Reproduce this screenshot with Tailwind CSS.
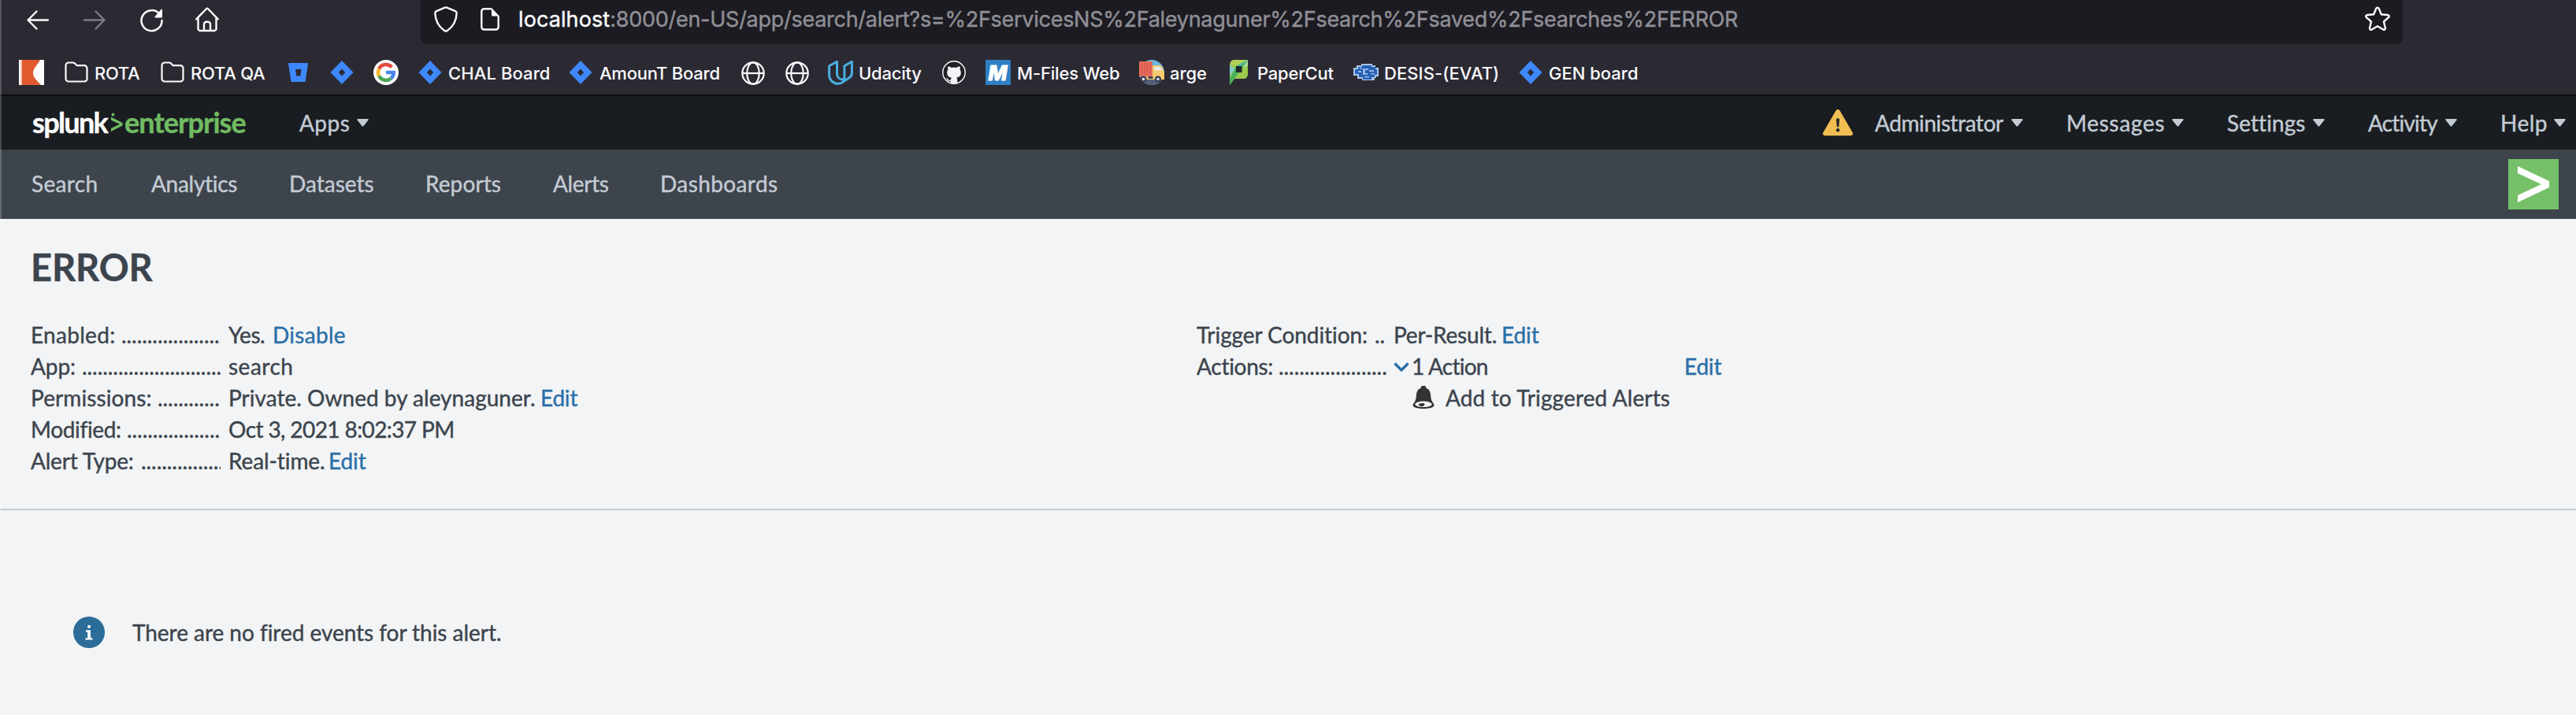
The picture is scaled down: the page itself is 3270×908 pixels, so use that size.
<!DOCTYPE html>
<html lang="en">
<head>
<meta charset="utf-8">
<title>ERROR | Splunk</title>
<script src="https://cdn.jsdelivr.net/npm/@tailwindcss/browser@4"></script>
</head>
<body class="w-[3270px] h-[908px] overflow-hidden bg-[#f2f4f5] text-[#3c444d] font-['Lato',sans-serif] text-[28px] leading-[40px] whitespace-nowrap">

<svg class="hidden">
  <defs>
    <linearGradient id="jg1" x1="1" y1="0" x2="0.4" y2="0.7"><stop offset="0.1" stop-color="#1f5fd0"/><stop offset="1" stop-color="#3f88fb"/></linearGradient>
    <linearGradient id="jg2" x1="0" y1="1" x2="0.6" y2="0.3"><stop offset="0.1" stop-color="#1f5fd0"/><stop offset="1" stop-color="#3f88fb"/></linearGradient>
    <linearGradient id="bb" x1="1" y1="0.3" x2="0.4" y2="0.9"><stop offset="0.1" stop-color="#1f5fd0"/><stop offset="1" stop-color="#3f88fb"/></linearGradient>
    <symbol id="jira" viewBox="0 0 30 32">
      <path d="M15 1 29.500 16 15 31 .5 16zM15 11.500 10.800 16l4.200 4.500L19.200 16z" fill="#3f88fb" fill-rule="evenodd"/>
      <path d="M15 1v10.500L10.800 16 8.500 18 6 10.300z" fill="url(#jg1)"/>
      <path d="M15 31V20.500L19.200 16 21.500 14 24 21.700z" fill="url(#jg2)"/>
    </symbol>
    <symbol id="folder" viewBox="0 0 30 28">
      <path d="M1.500 5a3.500 3.500 0 0 1 3.500-3.500h5.500c1 0 1.800.3 2.500 1l2.700 2.700h9.300a3.500 3.500 0 0 1 3.500 3.500V22a3.500 3.500 0 0 1-3.500 3.500H5A3.500 3.500 0 0 1 1.500 22z" fill="none" stroke="#fbfbfe" stroke-width="2.200"/>
    </symbol>
    <symbol id="globe" viewBox="0 0 30 30">
      <g fill="none" stroke="#fbfbfe" stroke-width="2.200"><circle cx="15" cy="15" r="13.700"/><ellipse cx="15" cy="15" rx="7.800" ry="13.700"/><path d="M1.500 15h27"/></g>
    </symbol>
    <symbol id="caret" viewBox="0 0 15 10"><path d="M1.200 0h12.600c.9 0 1.300.9.700 1.600L8.500 9c-.6.700-1.400.7-2 0L.5 1.600C-.1.900.3 0 1.200 0z" fill="currentColor"/></symbol>
  </defs>
</svg>

<!-- browser toolbar -->
<header class="h-[122px] bg-[#2b2a33] border-b-2 border-[#0c0c0d] text-[#fbfbfe] font-['Inter',sans-serif]">
  <div class="h-[56px] flex">
    <div class="w-[534px] flex items-start pl-[34px] pt-2">
      <svg class="w-[28px] h-[34px] mr-[44px]" viewBox="0 0 28 34" fill="none" stroke="#fbfbfe" stroke-width="2.400" stroke-linecap="round" stroke-linejoin="round"><path d="M27 17.500H2M12.500 6.500 1.500 17.500l11 11"/></svg>
      <svg class="w-[28px] h-[34px] mr-[44px]" viewBox="0 0 28 34" fill="none" stroke="#7d7c84" stroke-width="2.400" stroke-linecap="round" stroke-linejoin="round"><path d="M1 17.500h25M15.500 6.500l11 11-11 11"/></svg>
      <svg class="w-[29px] h-[34px] mr-[41px]" viewBox="0 0 29 34"><path d="M24.500 9.800A13 13 0 1 0 27.500 18" fill="none" stroke="#fbfbfe" stroke-width="2.500" stroke-linecap="round"/><path d="M28 4.500v9a1 1 0 0 1-1 1h-7.600c-.9 0-1.300-1-.7-1.600l7.700-9c.6-.6 1.600-.3 1.600.6z" fill="#fbfbfe"/></svg>
      <svg class="w-[30px] h-[34px]" viewBox="0 0 30 34" fill="none" stroke="#fbfbfe" stroke-width="2.400" stroke-linecap="round" stroke-linejoin="round"><path d="M1.300 16.300 13.600 3.500a2 2 0 0 1 2.800 0l12.300 12.800M3.500 14.500v14a2.500 2.500 0 0 0 2.500 2.500h18a2.500 2.500 0 0 0 2.500-2.500v-14M11 30.500v-7.800a3 3 0 0 1 3-3h2a3 3 0 0 1 3 3v7.800"/></svg>
    </div>
    <div class="w-[2516px] h-[56px] rounded-b-lg bg-[#1c1b22] flex items-start pl-[17px]">
      <svg class="w-[30px] h-[34px] mt-[7px] mr-[29px]" viewBox="0 0 30 34" fill="none" stroke="#fbfbfe" stroke-width="2.400" stroke-linejoin="round"><path d="M13.800 2.600a3 3 0 0 1 2.400 0L27 7.200c1.100.5 1.800 1.400 1.700 2.600-.5 10.200-4.600 17.200-11.700 22a3.300 3.300 0 0 1-4 0C5.900 27 1.800 20 1.300 9.800c0-1.200.6-2.100 1.700-2.600z"/></svg>
      <svg class="w-[24px] h-[34px] mt-[7px] mr-[24px]" viewBox="0 0 24 34"><path d="M14 4.200H4.500A3.200 3.200 0 0 0 1.300 7.400v19.900a3.200 3.200 0 0 0 3.200 3.200h15a3.200 3.200 0 0 0 3.200-3.200V13" fill="none" stroke="#fbfbfe" stroke-width="2.400"/><path d="M14 3l10 10.500h-8.500a1.500 1.500 0 0 1-1.500-1.500z" fill="#fbfbfe"/></svg>
      <div class="w-[2344px] mt-[5px] flex text-[27px] leading-[40px] [-webkit-text-stroke:0.4px]"><span class="tracking-[0.1px]">localhost</span><span class="text-[#8f8f96] tracking-[-0.27px]">:8000/en-US/app/search/alert?s=%2FservicesNS%2Faleynaguner%2Fsearch%2Fsaved%2Fsearches%2FERROR</span></div>
      <svg class="w-[32px] h-[32px] mt-[8px]" viewBox="0 0 32 32" fill="none" stroke="#fbfbfe" stroke-width="2.400" stroke-linejoin="round"><path d="M14.300 2.700c.7-1.500 2.700-1.500 3.400 0l3.100 7.600 8.200.7c1.700.2 2.300 2 1 3.200l-6 5.300 1.900 8.100c.3 1.700-1.300 2.800-2.700 1.900L16 25.300l-7.200 4.200c-1.400.9-3-.2-2.700-1.900L8 19.500l-6-5.300c-1.300-1.200-.7-3 1-3.200l8.200-.7z"/></svg>
    </div>
  </div>

  <nav class="h-[64px] mt-[1px] pl-6 flex text-[22px] leading-[40px] font-medium pt-4">
    <div class="w-[58px]"><svg class="w-8 h-8 mt-[3px]" viewBox="0 0 32 32"><path d="M0 0h32v32H0z" fill="#fff"/><path d="M2 0h2v32H2z" fill="#f4c4b2"/><path d="M4 0h23c-3 6-9 10-9 17 0 6 6 10 10 15H4z" fill="#e0592f"/></svg></div>
    <div class="w-[122px] flex"><svg class="w-[30px] h-[28px] mt-[5px] mr-[8px]"><use href="#folder"/></svg><span class="tracking-[-0.31px]">ROTA</span></div>
    <div class="w-[162px] flex"><svg class="w-[30px] h-[28px] mt-[5px] mr-[8px]"><use href="#folder"/></svg><span class="tracking-[-0.25px]">ROTA QA</span></div>
    <div class="w-[53px]"><svg class="w-[25px] h-[24px] mt-[7px]" viewBox="0 0 25 24"><path d="M.8 0h23.400c.5 0 .9.5.8 1l-3.300 22c-.1.600-.5 1-1.100 1H4.600c-.6 0-1.100-.4-1.200-1L0 1C-.1.500.3 0 .8 0zM9 8l1.300 8.500h5L16.500 8z" fill="#3f88fb" fill-rule="evenodd"/><path d="M23.800 8h-7.300l-1.200 8.500h-5L4 23.700c.2.200.4.300.6.300h16c.6 0 1-.4 1.100-1z" fill="url(#bb)"/></svg></div>
    <div class="w-[55px]"><svg class="w-[30px] h-8 mt-[3px]"><use href="#jira"/></svg></div>
    <div class="w-[57px]"><svg class="w-8 h-8 mt-[3px]" viewBox="0 0 32 32"><circle cx="16" cy="16" r="16" fill="#fff"/><g fill="none" stroke-width="4.600"><path d="M23.400 9.200A10 10 0 0 0 7.100 11.500" stroke="#e04a3c"/><path d="M7.100 11.500a10 10 0 0 0 0 9" stroke="#f5bb2e"/><path d="M7.100 20.500a10 10 0 0 0 15.400 3" stroke="#4aa556"/><path d="M22.500 23.500A9.500 9.500 0 0 0 25.700 16H16" stroke="#4a86ee"/></g></svg></div>
    <div class="w-[191px] flex"><svg class="w-[30px] h-8 mt-[3px] mr-[8px]"><use href="#jira"/></svg><span class="tracking-[0.1px]">CHAL Board</span></div>
    <div class="w-[219px] flex"><svg class="w-[30px] h-8 mt-[3px] mr-[9px]"><use href="#jira"/></svg><span class="tracking-[-0.25px]">AmounT Board</span></div>
    <div class="w-[56px]"><svg class="w-[30px] h-[30px] mt-[5px]"><use href="#globe"/></svg></div>
    <div class="w-[54px]"><svg class="w-[30px] h-[30px] mt-[5px]"><use href="#globe"/></svg></div>
    <div class="w-[145px] flex"><svg class="w-8 h-8 mt-[3px] mr-[7px]" viewBox="0 0 32 32" fill="none" stroke="#4aaee0" stroke-width="3" stroke-linejoin="round" stroke-linecap="round"><path d="M11.500 2.200 1.600 7.800v11.500a11 11 0 0 0 18.400 8l7-4.600a7 7 0 0 0 3.400-6V2.200l-9.500 5.600v15.500a1.800 1.800 0 0 1-1.800 1.800c-4.500 0-7.600-3-7.600-7.500z"/></svg><span class="tracking-[-0.2px]">Udacity</span></div>
    <div class="w-[55px]"><svg class="w-[30px] h-[30px] mt-[4px]" viewBox="0 0 30 30"><circle cx="15" cy="15" r="14.200" fill="#202127" stroke="#fff" stroke-width="1.400"/><path d="M7.500 7.300c1.800 0 3.200.9 4.200 1.700a14 14 0 0 1 6.600 0c1-.8 2.400-1.700 4.200-1.700.5 1.400.4 2.800 0 3.900 1 1.200 1.300 2.600 1.300 4.200 0 4-2.400 5.500-5.600 6 .8 1 1 2 1 3.200V29.500h-8.400v-3.300c-3.300.7-4-1.700-5-2.900-.5-.6-1.300-.9-1-1.200 1.800-.5 2.700 1.500 3.700 2.300.8.600 1.700.5 2.400.2 0-1.200.4-2.100 1-2.800-3.300-.5-5.700-2.200-5.700-6.200 0-1.700.4-3.200 1.300-4.400-.4-1.100-.5-2.500 0-3.900z" fill="#f4f4f6"/></svg></div>
    <div class="w-[195px] flex"><svg class="w-8 h-8 mt-[3px] mr-[8px]" viewBox="0 0 32 32"><path d="M0 0h32v32H0z" fill="#2f7fc4"/><text x="15.500" y="25.500" text-anchor="middle" textLength="24" lengthAdjust="spacingAndGlyphs" fill="#fff" stroke="#fff" stroke-width="1" font-family="Inter" font-size="26" font-weight="800" font-style="italic">M</text></svg><span class="tracking-[-0.18px]">M-Files Web</span></div>
    <div class="w-[115px] flex"><svg class="w-8 h-8 mt-[3px] mr-[7px]" viewBox="0 0 32 32"><circle cx="16" cy="16" r="16" fill="#6cb8de"/><path d="M1 22h30a16 16 0 0 1-30 0z" fill="#56627c"/><path d="M0 2h17v19H0z" fill="#ea6b5c"/><path d="M3.500 4v15M7 4v15M10.500 4v15M14 4v15" stroke="#c9554a" stroke-width="1"/><path d="M17 7h9c2 0 3.500 2 4.500 5l1.500 4v9H2v-4h15z" fill="#f8cb6c"/><path d="M19 9h7c1.500 0 2.500 2 3 4.500H19z" fill="#e8eaf0"/><path d="M11.500 21h6v3h-6z" fill="#3e4860"/><circle cx="5.500" cy="24.500" r="4" fill="#343e56"/><circle cx="5.500" cy="24.500" r="1.700" fill="#e8eaf0"/><circle cx="24" cy="24.500" r="4" fill="#343e56"/><circle cx="24" cy="24.500" r="1.700" fill="#e8eaf0"/></svg><span class="tracking-[-0.07px]">arge</span></div>
    <div class="w-[157px] flex"><svg class="w-[23px] h-8 mt-[3px] mr-[12px]" viewBox="0 0 23 32"><path d="M6 0h17v18.500A5.500 5.500 0 0 1 17.500 24H6L0 32V6a6 6 0 0 1 6-6z" fill="#9ccb50"/><path d="M6 0h17L7 8 1 3.500A6 6 0 0 1 6 0z" fill="#b3cf55"/><path d="M23 0v7l-5 3-6-4z" fill="#b5dba4"/><path d="M0 6.500 7.500 12 0 20z" fill="#86cbc8"/><path d="M23 0 8 8 0 24v8l9-12 6-8z" fill="#4bb25c"/><path d="M23 0 8 8l4 2z" fill="#4db5a5"/><path d="M8 8h7.500v8H8z" fill="#202a2c"/></svg><span class="tracking-[-0.2px]">PaperCut</span></div>
    <div class="w-[210px] flex"><svg class="w-8 h-[22px] mt-[8px] mr-[7px]" viewBox="0 0 32 22"><path d="M0 5h4V2h6V0h14v2h4v3h4v11h-3v2h-2v3H11v-2H5v-4H0z" fill="#a9c8ea"/><path d="M2 7h4V4h5V2h12v2h5v3h2v7h-3v3h-4v3H12v-3H7v-4H2z" fill="#2760b4"/><path d="M6 9h4v2H6zM12 6h7v2h-4v4h3v2h-6zM20 8h6v2h-6zM22 12h5v1.500h-5zM14 16h6v1.500h-6zM8 5h3v1.500H8z" fill="#8db8e6"/></svg><span class="tracking-[0.07px]">DESIS-(EVAT)</span></div>
    <div class="flex"><svg class="w-[30px] h-8 mt-[3px] mr-[8px]"><use href="#jira"/></svg><span>GEN board</span></div>
  </nav>
</header>

<!-- Splunk bar -->
<div class="h-[68px] bg-[#191d21] text-[#c3cbd4] flex items-center pl-[41px] pb-[1px] [-webkit-text-stroke:0.4px]">
  <div class="w-[339px] flex items-center pb-[2px]">
    <span class="w-[99px] text-[36px] font-bold text-white tracking-[-1.65px]">splunk</span>
    <svg class="w-[17px] h-[28px] mt-[3px]" viewBox="0 0 17 28"><path d="M1 6.500 15.500 14v3.500L1 25v-4l11-5.200L1 10.500z" fill="#71bb62"/><circle cx="3.500" cy="3.500" r="1.900" fill="#71bb62"/></svg>
    <span class="text-[36px] font-bold text-[#71bb62] tracking-[-0.95px] ml-[1px]">enterprise</span>
  </div>
  <div class="w-[1934px] flex items-center"><span class="w-[73px] tracking-[0.45px]">Apps</span><svg class="w-[15px] h-[10px]"><use href="#caret"/></svg></div>
  <svg class="w-[38px] h-[34px] mr-[28px]" viewBox="0 0 38 34"><path d="M16.300 1.700c1.200-2.200 4.200-2.200 5.400 0L37.500 29c1.200 2.200.3 4.200-2 4.200h-33c-2.300 0-3.200-2-2-4.200z" fill="#f0be52"/><path d="M17 13c0-2.400 4-2.400 4 0l-.7 8.500c-.2 1.200-2.400 1.200-2.600 0z" fill="#20252a"/><circle cx="19" cy="26.300" r="2.200" fill="#20252a"/></svg>
  <div class="w-[243px] flex items-center"><span class="w-[173px] tracking-[-0.42px]">Administrator</span><svg class="w-[15px] h-[10px]"><use href="#caret"/></svg></div>
  <div class="w-[204px] flex items-center"><span class="w-[134px] tracking-[0.7px]">Messages</span><svg class="w-[15px] h-[10px]"><use href="#caret"/></svg></div>
  <div class="w-[179px] flex items-center"><span class="w-[109px] tracking-[0.08px]">Settings</span><svg class="w-[15px] h-[10px]"><use href="#caret"/></svg></div>
  <div class="w-[168px] flex items-center"><span class="w-[98px] tracking-[-0.82px]">Activity</span><svg class="w-[15px] h-[10px]"><use href="#caret"/></svg></div>
  <div class="flex items-center"><span class="w-[68px] tracking-[0.5px]">Help</span><svg class="w-[15px] h-[10px]"><use href="#caret"/></svg></div>
</div>

<!-- app navigation -->
<nav class="h-[88px] bg-[#3e444c] text-[#c3cbd4] flex items-center pl-[40px] [-webkit-text-stroke:0.4px]">
  <span class="w-[152px] pb-[2px] tracking-[0.35px]">Search</span>
  <span class="w-[175px] pb-[2px] tracking-[-0.29px]">Analytics</span>
  <span class="w-[173px] pb-[2px] tracking-[0.02px]">Datasets</span>
  <span class="w-[162px] pb-[2px] tracking-[0.1px]">Reports</span>
  <span class="w-[136px] pb-[2px] tracking-[-0.35px]">Alerts</span>
  <span class="w-[2346px] pb-[2px] tracking-[0.4px]">Dashboards</span>
  <svg class="w-[64px] h-[64px]" viewBox="0 0 64 64"><path d="M0 0h64v64H0z" fill="#77c06a"/><path d="M12 9 52 28v8L12 55v-9l30-14L12 18z" fill="#fff"/></svg>
</nav>

<main class="[-webkit-text-stroke:0.4px]">
  <h1 class="pl-[39px] pt-[31px] text-[47px] leading-[60px] font-bold tracking-[-0.1px]">ERROR</h1>
  <section class="h-[243px] mt-[36px] pl-[39px] border-b-2 border-[#c3cbd4] flex">
    <dl class="w-[1480px] grid grid-cols-[241px_1fr] gap-x-[10px] auto-rows-[40px] content-start">
      <dt class="overflow-hidden flex"><span class="shrink-0 w-[115px] tracking-[0.3px]">Enabled:</span><span class="tracking-[-0.05px]">....................</span></dt>
      <dd class="flex"><span class="w-[56px] tracking-[-0.4px]">Yes.</span><a class="text-[#2a6fa8] tracking-[0.3px]">Disable</a></dd>
      <dt class="overflow-hidden flex"><span class="shrink-0 w-[65px] tracking-[-0.1px]">App:</span><span class="tracking-[-0.05px]">...........................</span></dt>
      <dd class="tracking-[0.5px]">search</dd>
      <dt class="overflow-hidden flex"><span class="shrink-0 w-[161px] tracking-[0.1px]">Permissions:</span><span class="tracking-[-0.05px]">.............</span></dt>
      <dd class="flex"><span class="w-[396px] tracking-[0.02px]">Private. Owned by aleynaguner.</span><a class="text-[#2a6fa8] tracking-[-0.2px]">Edit</a></dd>
      <dt class="overflow-hidden flex"><span class="shrink-0 w-[122px] tracking-[-0.35px]">Modified:</span><span class="tracking-[-0.05px]">...................</span></dt>
      <dd class="tracking-[-0.6px]">Oct 3, 2021 8:02:37 PM</dd>
      <dt class="overflow-hidden flex"><span class="shrink-0 w-[140px] tracking-[-0.2px]">Alert Type:</span><span class="tracking-[-0.05px]">................</span></dt>
      <dd class="flex"><span class="w-[127px] tracking-[-0.1px]">Real-time.</span><a class="text-[#2a6fa8] tracking-[-0.1px]">Edit</a></dd>
    </dl>
    <dl class="w-[670px] grid grid-cols-[243px_1fr] gap-x-[7px] auto-rows-[40px] content-start">
      <dt class="overflow-hidden flex"><span class="shrink-0 w-[226px] tracking-[-0.08px]">Trigger Condition:</span><span class="tracking-[-0.05px]">..</span></dt>
      <dd class="flex"><span class="w-[137px] tracking-[-0.2px]">Per-Result.</span><a class="text-[#2a6fa8] tracking-[-0.1px]">Edit</a></dd>
      <dt class="overflow-hidden flex"><span class="shrink-0 w-[104px] tracking-[-0.28px]">Actions:</span><span class="tracking-[-0.05px]">.....................</span></dt>
      <dd class="flex items-center"><svg class="w-[20px] h-[12px] mt-[2px] mr-[3px]" viewBox="0 0 20 12"><path d="m1.500 1.500 8.500 8.500 8.500-8.500" fill="none" stroke="#2a6fa8" stroke-width="3.400"/></svg><span class="w-[346px] tracking-[-0.75px]">1 Action</span><a class="text-[#2a6fa8] tracking-[-0.2px]">Edit</a></dd>
      <dd class="col-start-2 flex items-center"><svg class="w-[28px] h-[30px] ml-[24px] mr-[14px]" viewBox="0 0 28 30"><path d="M11 1.500C11 .6 11.600 0 12.500 0h3c.9 0 1.500.6 1.500 1.500V2.500c4 1.500 5.500 4.500 6 8.500.5 4.500.5 7 3 10.500 1 1.500 1.500 2 1.500 3C27.500 27.500 21 29 14 29S.5 27.500.5 24.500c0-1 .5-1.500 1.500-3 2.500-3.500 2.500-6 3-10.500.5-4 2-7 6-8.500z" fill="#333"/><ellipse cx="14" cy="23.300" rx="10.800" ry="3.700" fill="#f2f4f5"/><path d="M7 23.500c2-.6 3.500-1.800 6.500-1.500 2 .3 2.500 1.300 1.500 2.500-1.200 1.500-2.500 2-5 1.300-1-.5-2-1.600-3-2.300z" fill="#333"/></svg><span class="tracking-[0.12px]">Add to Triggered Alerts</span></dd>
    </dl>
  </section>
  <section class="mt-[135px] pl-[93px] flex items-center">
    <svg class="w-[40px] h-[40px] mr-[35px]" viewBox="0 0 40 40"><circle cx="20" cy="20" r="20" fill="#2b6c99"/><circle cx="20" cy="12.800" r="2" fill="#fff"/><path d="M16 17.200h6v10h2.500v2.300h-9v-2.300h2.700v-7.700H16z" fill="#fff"/></svg>
    <p class="tracking-[-0.04px]">There are no fired events for this alert.</p>
  </section>
</main>

<!-- window edge highlight -->
<div class="absolute left-0 top-0 w-[2px] h-[908px] bg-white/20"></div>
</body>
</html>
